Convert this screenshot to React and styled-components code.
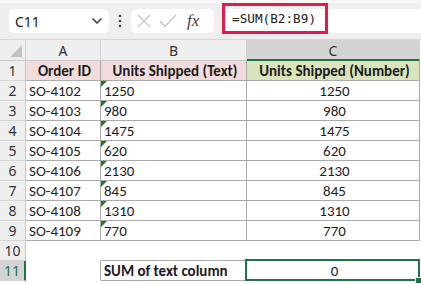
import React from "react";
import styled, { createGlobalStyle } from "styled-components";

const GlobalStyle = createGlobalStyle`
  body {
    margin: 0;
    background: #ffffff;
  }
`;

const GREEN = "#217346";
const LINE = "#aaaaaa";
const FONT = `Carlito, Lato, "Liberation Sans", sans-serif`;

const Page = styled.div`
  width: 421px;
  height: 284px;
  overflow: hidden;
  display: flex;
  flex-direction: column;
  font-family: ${FONT};
`;

const FormulaBar = styled.div`
  height: 40px;
  box-sizing: border-box;
  background: #efefef;
  border-top: 3px solid #f7f7f7;
  border-bottom: 1px solid #d6d6d6;
  display: flex;
  align-items: flex-start;
  padding: 6px 0 0 9px;
`;

const Box = styled.div`
  height: 24px;
  background: #ffffff;
  border-radius: 5px;
  box-sizing: border-box;
  display: flex;
  align-items: center;
`;

const NameBox = styled(Box)`
  width: 100px;
  padding: 0 6px;
  justify-content: space-between;
  font-family: "Noto Sans", "Open Sans", sans-serif;
  font-size: 14px;
  color: #222;
`;

const Dots = styled.div`
  width: 22px;
  height: 24px;
  display: flex;
  align-items: center;
  justify-content: center;
`;

const FxBox = styled(Box)`
  width: 83px;
  padding: 0 0 0 6px;
  gap: 8px;
`;

const Fx = styled.span`
  font-family: "Liberation Serif", serif;
  font-style: italic;
  font-size: 17px;
  color: #444;
  margin-left: 2px;
`;

const FormulaInput = styled(Box)`
  flex: 1;
  margin-left: 8px;
  border-radius: 5px 0 0 5px;
  align-items: flex-start;
`;

const Highlight = styled.div`
  margin-top: -6px;
  height: 31px;
  width: 106px;
  box-sizing: border-box;
  border: 3px solid #e31b4c;
  display: flex;
  align-items: center;
  padding-left: 7px;
  font-family: "DejaVu Sans Mono", "Liberation Mono", monospace;
  font-size: 12.7px;
  color: #222;
`;

const Sheet = styled.div`
  display: grid;
  grid-template-columns: 26px 75px 146px 173px 1fr;
  grid-template-rows: 21px repeat(11, 20px);
`;

const Corner = styled.div`
  background: #efefef;
  border-right: 1px solid #d0d0d0;
  border-bottom: 1px solid #c6c6c6;
  display: flex;
  align-items: flex-end;
  justify-content: flex-end;
  padding: 0 3px 3px 0;
`;

const ColHead = styled.div`
  box-sizing: border-box;
  background: ${({ $selected }) => ($selected ? "#d3d3d3" : "#efefef")};
  border-right: 1px solid #d0d0d0;
  border-bottom: ${({ $selected }) =>
    $selected ? `2px solid ${GREEN}` : "1px solid #c6c6c6"};
  display: flex;
  align-items: center;
  justify-content: center;
  padding-top: ${({ $selected }) => ($selected ? "1px" : "0")};
  font-family: "Noto Sans", "Open Sans", sans-serif;
  font-size: 14px;
  color: #333;
`;

const RowHead = styled.div`
  box-sizing: border-box;
  background: ${({ $selected }) => ($selected ? "#d3d3d3" : "#efefef")};
  border-right: ${({ $selected }) =>
    $selected ? `2px solid ${GREEN}` : "1px solid #c6c6c6"};
  border-bottom: 1px solid #d6d6d6;
  display: flex;
  align-items: center;
  justify-content: center;
  font-family: "Noto Sans", "Open Sans", sans-serif;
  font-size: 14px;
  color: ${({ $selected }) => ($selected ? GREEN : "#333")};
`;

const Cell = styled.div`
  position: relative;
  box-sizing: border-box;
  background: ${({ $bg }) => $bg || "#ffffff"};
  border-right: 1px solid ${({ $right }) => ($right ? LINE : "transparent")};
  border-bottom: 1px solid ${({ $bottom }) => ($bottom ? LINE : "transparent")};
  display: flex;
  align-items: center;
  justify-content: ${({ $center }) => ($center ? "center" : "flex-start")};
  padding: 1px 0 0 3px;
  font-size: 15px;
  font-weight: ${({ $bold }) => ($bold ? 700 : 400)};
  color: #1c1c1c;
  white-space: nowrap;

  ${({ $flag }) =>
    $flag &&
    `
    &::before {
      content: "";
      position: absolute;
      left: 0;
      top: 0;
      border-top: 6px solid #1d7a22;
      border-right: 6px solid transparent;
    }
  `}

  ${({ $active }) =>
    $active &&
    `
    &::after {
      content: "";
      position: absolute;
      left: -2px;
      top: -2px;
      right: -1px;
      bottom: -1px;
      border: 2px solid ${GREEN};
      pointer-events: none;
    }
  `}
`;

const Handle = styled.span`
  position: absolute;
  right: -2px;
  bottom: -3px;
  width: 5px;
  height: 5px;
  background: ${GREEN};
  border-top: 1px solid #fff;
  border-left: 1px solid #fff;
  z-index: 2;
`;

const Spacer = styled.div``;

const rows = [
  ["SO-4102", "1250"],
  ["SO-4103", "980"],
  ["SO-4104", "1475"],
  ["SO-4105", "620"],
  ["SO-4106", "2130"],
  ["SO-4107", "845"],
  ["SO-4108", "1310"],
  ["SO-4109", "770"],
];

function Chevron() {
  return (
    <svg width="12" height="8" viewBox="0 0 12 8">
      <path d="M1.5 1.5 L6 6 L10.5 1.5" fill="none" stroke="#333" strokeWidth="1.4" />
    </svg>
  );
}

function VDots() {
  return (
    <svg width="4" height="14" viewBox="0 0 4 14">
      <circle cx="2" cy="2" r="1.3" fill="#444" />
      <circle cx="2" cy="7" r="1.3" fill="#444" />
      <circle cx="2" cy="12" r="1.3" fill="#444" />
    </svg>
  );
}

function Cross() {
  return (
    <svg width="14" height="14" viewBox="0 0 14 14">
      <path d="M1 1 L13 13 M13 1 L1 13" stroke="#c4c4c4" strokeWidth="1.2" />
    </svg>
  );
}

function Check() {
  return (
    <svg width="18" height="14" viewBox="0 0 18 14">
      <path d="M1 7 L6 12.5 L17 1" fill="none" stroke="#c4c4c4" strokeWidth="1.2" />
    </svg>
  );
}

function SelectAll() {
  return (
    <svg width="12" height="12" viewBox="0 0 12 12">
      <path d="M12 0 L12 12 L0 12 Z" fill="#c2c2c2" />
    </svg>
  );
}

export default function App() {
  return (
    <>
      <GlobalStyle />
      <Page>
        <FormulaBar>
          <NameBox>
            C11
            <Chevron />
          </NameBox>
          <Dots>
            <VDots />
          </Dots>
          <FxBox>
            <Cross />
            <Check />
            <Fx>fx</Fx>
          </FxBox>
          <FormulaInput>
            <Highlight>=SUM(B2:B9)</Highlight>
          </FormulaInput>
        </FormulaBar>

        <Sheet>
          <Corner>
            <SelectAll />
          </Corner>
          <ColHead>A</ColHead>
          <ColHead>B</ColHead>
          <ColHead $selected>C</ColHead>
          <Spacer />

          <RowHead>1</RowHead>
          <Cell $bg="#f2dcdb" $right $bottom $center $bold>Order ID</Cell>
          <Cell $bg="#f2dcdb" $right $bottom $center $bold>Units Shipped (Text)</Cell>
          <Cell $bg="#d8e4bc" $right $bottom $center $bold>Units Shipped (Number)</Cell>
          <Spacer />

          {rows.map(([id, units], i) => (
            <React.Fragment key={id}>
              <RowHead>{i + 2}</RowHead>
              <Cell $right $bottom>{id}</Cell>
              <Cell $right $bottom $flag>{units}</Cell>
              <Cell $right $bottom $center>{units}</Cell>
              <Spacer />
            </React.Fragment>
          ))}

          <RowHead>10</RowHead>
          <Cell />
          <Cell $bottom />
          <Cell />
          <Spacer />

          <RowHead $selected>11</RowHead>
          <Cell $right />
          <Cell $right $bottom $bold>SUM of text column</Cell>
          <Cell $center $active>
            0
            <Handle />
          </Cell>
          <Spacer />
        </Sheet>
      </Page>
    </>
  );
}
